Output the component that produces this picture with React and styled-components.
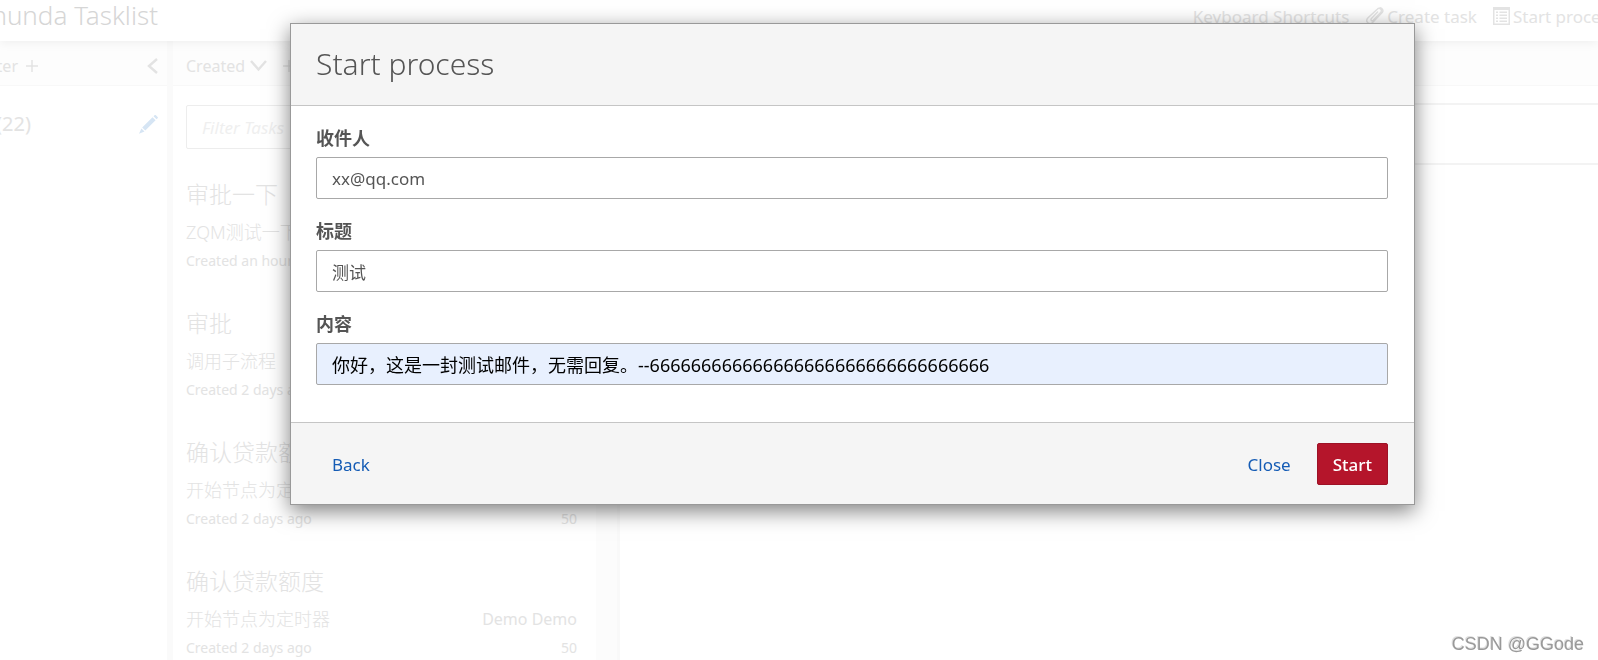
import { useState } from "react"
import styled, { createGlobalStyle } from "styled-components"

const GlobalStyle = createGlobalStyle`
  * {
    box-sizing: border-box;
  }

  body {
    margin: 0;
    background: #fff;
    color: #555;
    font-family: "Noto Sans", "Noto Sans CJK SC", sans-serif;
    font-size: 17px;
  }

  input,
  button {
    font-family: inherit;
  }

  svg {
    flex: none;
  }
`

const Page = styled.div`
  display: flex;
  flex-direction: column;
  height: 100vh;
  overflow: hidden;
  color: #e3e3e3;
`

const TopBar = styled.header`
  position: relative;
  display: flex;
  flex: none;
  align-items: flex-start;
  height: 41px;
  box-shadow: 0 2px 10px rgba(0, 0, 0, 0.06);
`

const Brand = styled.h1`
  display: flex;
  justify-content: flex-end;
  width: 158px;
  margin: 0;
  color: #d6d6d6;
  font-size: 26px;
  font-weight: 300;
  line-height: 31px;
  white-space: nowrap;
`

const TopNav = styled.nav`
  display: flex;
  flex: none;
  gap: 16px;
  margin-left: auto;
  margin-right: -19px;
`

const NavLink = styled.a`
  display: flex;
  align-items: center;
  gap: 3px;
  color: inherit;
  line-height: 34px;
  text-decoration: none;
  white-space: nowrap;

  svg {
    margin-bottom: 2px;
  }
`

const Columns = styled.main`
  display: flex;
  flex: 1;
  min-height: 0;
`

const FilterColumn = styled.aside`
  flex: none;
  width: 167px;
`

const ColumnHeader = styled.div`
  display: flex;
  align-items: center;
  height: 45px;
  padding: ${(props) => props.$padding || "0"};
  border-bottom: 1px solid #f8f8f8;
  background: #fdfdfd;
  font-size: 16px;
`

const Spread = styled.div`
  display: flex;
  flex: 1;
  align-items: center;
  justify-content: space-between;
`

const PlainButton = styled.button`
  display: flex;
  align-items: center;
  gap: 5px;
  padding: 0;
  border: 0;
  background: none;
  color: inherit;
  font-size: inherit;
`

const CutLeft = styled(PlainButton)`
  justify-content: flex-end;
  gap: 8px;
  width: 38px;
  white-space: nowrap;
`

const SortAdd = styled(PlainButton)`
  margin-left: 16px;
`

const FilterRow = styled.div`
  display: flex;
  align-items: center;
  justify-content: space-between;
  padding: 22px 9px 0 0;
`

const FilterName = styled.a`
  display: flex;
  justify-content: flex-end;
  width: 31px;
  color: inherit;
  font-size: 20px;
  line-height: 32px;
  text-decoration: none;
  white-space: nowrap;
`

const TaskColumn = styled.section`
  flex: none;
  width: 429px;
  border-left: 6px solid #fafafa;
`

const TaskBody = styled.div`
  padding: 19px 19px 0 13px;
`

const SearchBox = styled.input`
  display: block;
  width: 100%;
  height: 44px;
  padding: 0 15px;
  border: 1px solid #ededed;
  border-radius: 2px;
  background: #fff;
  font-size: 17px;

  &::placeholder {
    color: #efefef;
    font-style: italic;
  }
`

const TaskList = styled.ul`
  margin: 29px 0 0;
  padding: 0;
  list-style: none;
`

const TaskItem = styled.li`
  height: 129px;
`

const TaskTitle = styled.h4`
  margin: 0 0 8px;
  font-size: 23px;
  font-weight: 300;
  line-height: 32px;
`

const TaskLine = styled.div`
  display: flex;
  align-items: center;
  justify-content: space-between;
  margin-bottom: 3px;
  line-height: 28px;
`

const TaskProcess = styled.span`
  font-size: 18px;
  font-weight: 300;
`

const TaskAssignee = styled.span`
  font-size: 16px;
`

const TaskMeta = styled.div`
  display: flex;
  justify-content: space-between;
  font-size: 14px;
  line-height: 24px;
`

const Gutter = styled.div`
  flex: none;
  width: 24px;
  border-right: 3px solid #f9f9f9;
  background: #fcfcfc;
`

const DetailColumn = styled.section`
  flex: 1;
`

const DetailBand = styled.div`
  height: 62px;
  margin-top: 17px;
  border-top: 2px solid #f3f3f3;
  border-bottom: 2px solid #f3f3f3;
`

const Overlay = styled.div`
  position: fixed;
  inset: 0;
  padding: 23px 183px 0 290px;
`

const Dialog = styled.form`
  border: 1px solid #999;
  background: #fff;
  box-shadow: 0 6px 20px rgba(0, 0, 0, 0.5);
`

const DialogHeader = styled.div`
  padding: 19px 26px 21px 25px;
  border-bottom: 1px solid #c5c5c5;
  background: #f5f5f5;
`

const DialogTitle = styled.h3`
  margin: 0;
  font-size: 30px;
  font-weight: 300;
  line-height: 41px;
`

const DialogBody = styled.div`
  display: flex;
  flex-direction: column;
  gap: 20px;
  padding: 20px 26px 37px 25px;
`

const Field = styled.div`
  display: flex;
  flex-direction: column;
`

const Label = styled.label`
  margin-bottom: 7px;
  font-size: 18px;
  font-weight: 700;
  line-height: 24px;
`

const TextInput = styled.input`
  height: 42px;
  padding: 0 15px;
  border: 1px solid #a8a8a8;
  border-radius: 2px;
  outline: none;
  background: ${(props) => (props.$filled ? "#e8f0fe" : "#fff")};
  color: ${(props) => (props.$filled ? "#000" : "#555")};
  font-size: ${(props) => (props.$filled ? "18px" : "17px")};
`

const DialogFooter = styled.div`
  display: flex;
  justify-content: space-between;
  padding: 20px 26px 19px 25px;
  border-top: 1px solid #c5c5c5;
  background: #f5f5f5;
`

const FooterGroup = styled.div`
  display: flex;
  gap: 10px;
`

const Button = styled.button`
  height: 42px;
  padding: 0 15px;
  border: 1px solid ${(props) => (props.$primary ? "#9d1226" : "transparent")};
  border-radius: 2px;
  background: ${(props) => (props.$primary ? "#b5152b" : "transparent")};
  color: ${(props) => (props.$primary ? "#fff" : "#155cb5")};
  font-size: 17px;
  font-weight: ${(props) => (props.$primary ? 500 : 400)};
`

const Watermark = styled.div`
  position: fixed;
  right: 14px;
  bottom: 4px;
  color: #999;
  font-family: "Liberation Sans", sans-serif;
  font-size: 18px;
  line-height: 24px;
  text-shadow: -1px -1px 0 #e0e0e0;
`

const PaperclipIcon = () => (
  <svg width="19" height="18" viewBox="0 0 19 18" fill="none" stroke="currentColor" strokeWidth="1.4" strokeLinecap="round">
    <path d="M12.6 5 6.4 11.5c-1.3 1.4.5 3 1.8 1.7l7.4-7.8c2.2-2.5-1.1-5.5-3.4-3.2L2.8 11c-3 3.5 1.5 7.6 4.8 4.6l9.6-10c1.6-2 .2-4.6-2-4.8" />
  </svg>
)

const ListIcon = () => (
  <svg width="17" height="18" viewBox="0 0 17 18" fill="currentColor">
    <path fillRule="evenodd" d="M0 0h17v18H0zM1.5 3v13.5h14V3z" />
    <path d="M3 4.5h2V6H3zM6.5 4.5H14V6H6.5zM3 7.5h2V9H3zM6.5 7.5H14V9H6.5zM3 10.5h2V12H3zM6.5 10.5H14V12H6.5zM3 13.5h2V15H3zM6.5 13.5H14V15H6.5z" />
  </svg>
)

const PlusIcon = () => (
  <svg width="12" height="12" viewBox="0 0 12 12" fill="none" stroke="currentColor" strokeWidth="1.5">
    <path d="M6 0v12M0 6h12" />
  </svg>
)

const ChevronLeft = () => (
  <svg width="11" height="16" viewBox="0 0 11 16" fill="none" stroke="currentColor" strokeWidth="2.4">
    <path d="M10 1 2 8l8 7" />
  </svg>
)

const ChevronDown = () => (
  <svg width="17" height="12" viewBox="0 0 17 12" fill="none" stroke="currentColor" strokeWidth="2.4">
    <path d="m1 1 7.5 8.5L16 1" />
  </svg>
)

const PencilIcon = () => (
  <svg width="19" height="19" viewBox="0 0 19 19" fill="#d6e5f4">
    <path d="m14.5 1.2 1-1q.7-.5 1.4 0l1.7 1.8q.6.7 0 1.3l-1 1zM13.5 2.2l3.1 3.1L6.3 15.6l-3.1-3.1zM2.4 13.4l3.1 3.1L0 18.8z" />
  </svg>
)

const tasks = [
  { id: 1, title: "审批一下", process: "ZQM测试一下", created: "Created an hour ago" },
  { id: 2, title: "审批", process: "调用子流程", created: "Created 2 days ago" },
  { id: 3, title: "确认贷款额度", process: "开始节点为定时器", created: "Created 2 days ago" },
  { id: 4, title: "确认贷款额度", process: "开始节点为定时器", created: "Created 2 days ago" },
]

const fields = [
  { name: "receiver", label: "收件人" },
  { name: "subject", label: "标题" },
  { name: "content", label: "内容", filled: true },
]

const App = () => {
  const [values, setValues] = useState({
    receiver: "xx@qq.com",
    subject: "测试",
    content: "你好，这是一封测试邮件，无需回复。--" + "6".repeat(33),
  })

  const handleChange = (e) => {
    const { name, value } = e.target
    setValues((prev) => ({ ...prev, [name]: value }))
  }

  return (
    <>
      <GlobalStyle />
      <Page>
        <TopBar>
          <Brand>Camunda Tasklist</Brand>
          <TopNav>
            <NavLink href="#shortcuts">Keyboard Shortcuts</NavLink>
            <NavLink href="#task">
              <PaperclipIcon />
              Create task
            </NavLink>
            <NavLink href="#process">
              <ListIcon />
              Start process
            </NavLink>
          </TopNav>
        </TopBar>

        <Columns>
          <FilterColumn>
            <ColumnHeader $padding="6px 9px 0 0">
              <Spread>
                <CutLeft type="button">
                  Create a filter <PlusIcon />
                </CutLeft>
                <PlainButton type="button" aria-label="Collapse filters">
                  <ChevronLeft />
                </PlainButton>
              </Spread>
            </ColumnHeader>
            <FilterRow>
              <FilterName href="#all">All Tasks (22)</FilterName>
              <PlainButton type="button" aria-label="Edit filter">
                <PencilIcon />
              </PlainButton>
            </FilterRow>
          </FilterColumn>

          <TaskColumn>
            <ColumnHeader $padding="6px 13px 0">
              <PlainButton type="button">
                Created <ChevronDown />
              </PlainButton>
              <SortAdd type="button" aria-label="Add sorting">
                <PlusIcon />
              </SortAdd>
            </ColumnHeader>
            <TaskBody>
              <SearchBox type="text" placeholder="Filter Tasks" aria-label="Filter Tasks" />
              <TaskList>
                {tasks.map((task) => (
                  <TaskItem key={task.id}>
                    <TaskTitle>{task.title}</TaskTitle>
                    <TaskLine>
                      <TaskProcess>{task.process}</TaskProcess>
                      <TaskAssignee>Demo Demo</TaskAssignee>
                    </TaskLine>
                    <TaskMeta>
                      <span>{task.created}</span>
                      <span>50</span>
                    </TaskMeta>
                  </TaskItem>
                ))}
              </TaskList>
            </TaskBody>
          </TaskColumn>

          <Gutter />

          <DetailColumn>
            <ColumnHeader />
            <DetailBand />
          </DetailColumn>
        </Columns>
      </Page>

      <Overlay>
        <Dialog role="dialog" aria-labelledby="dialog-title" onSubmit={(e) => e.preventDefault()}>
          <DialogHeader>
            <DialogTitle id="dialog-title">Start process</DialogTitle>
          </DialogHeader>
          <DialogBody>
            {fields.map((field) => (
              <Field key={field.name}>
                <Label htmlFor={field.name}>{field.label}</Label>
                <TextInput
                  id={field.name}
                  name={field.name}
                  type="text"
                  value={values[field.name]}
                  onChange={handleChange}
                  $filled={field.filled}
                />
              </Field>
            ))}
          </DialogBody>
          <DialogFooter>
            <Button type="button">Back</Button>
            <FooterGroup>
              <Button type="button">Close</Button>
              <Button type="submit" $primary>
                Start
              </Button>
            </FooterGroup>
          </DialogFooter>
        </Dialog>
      </Overlay>

      <Watermark>CSDN @GGode</Watermark>
    </>
  )
}

export default App
